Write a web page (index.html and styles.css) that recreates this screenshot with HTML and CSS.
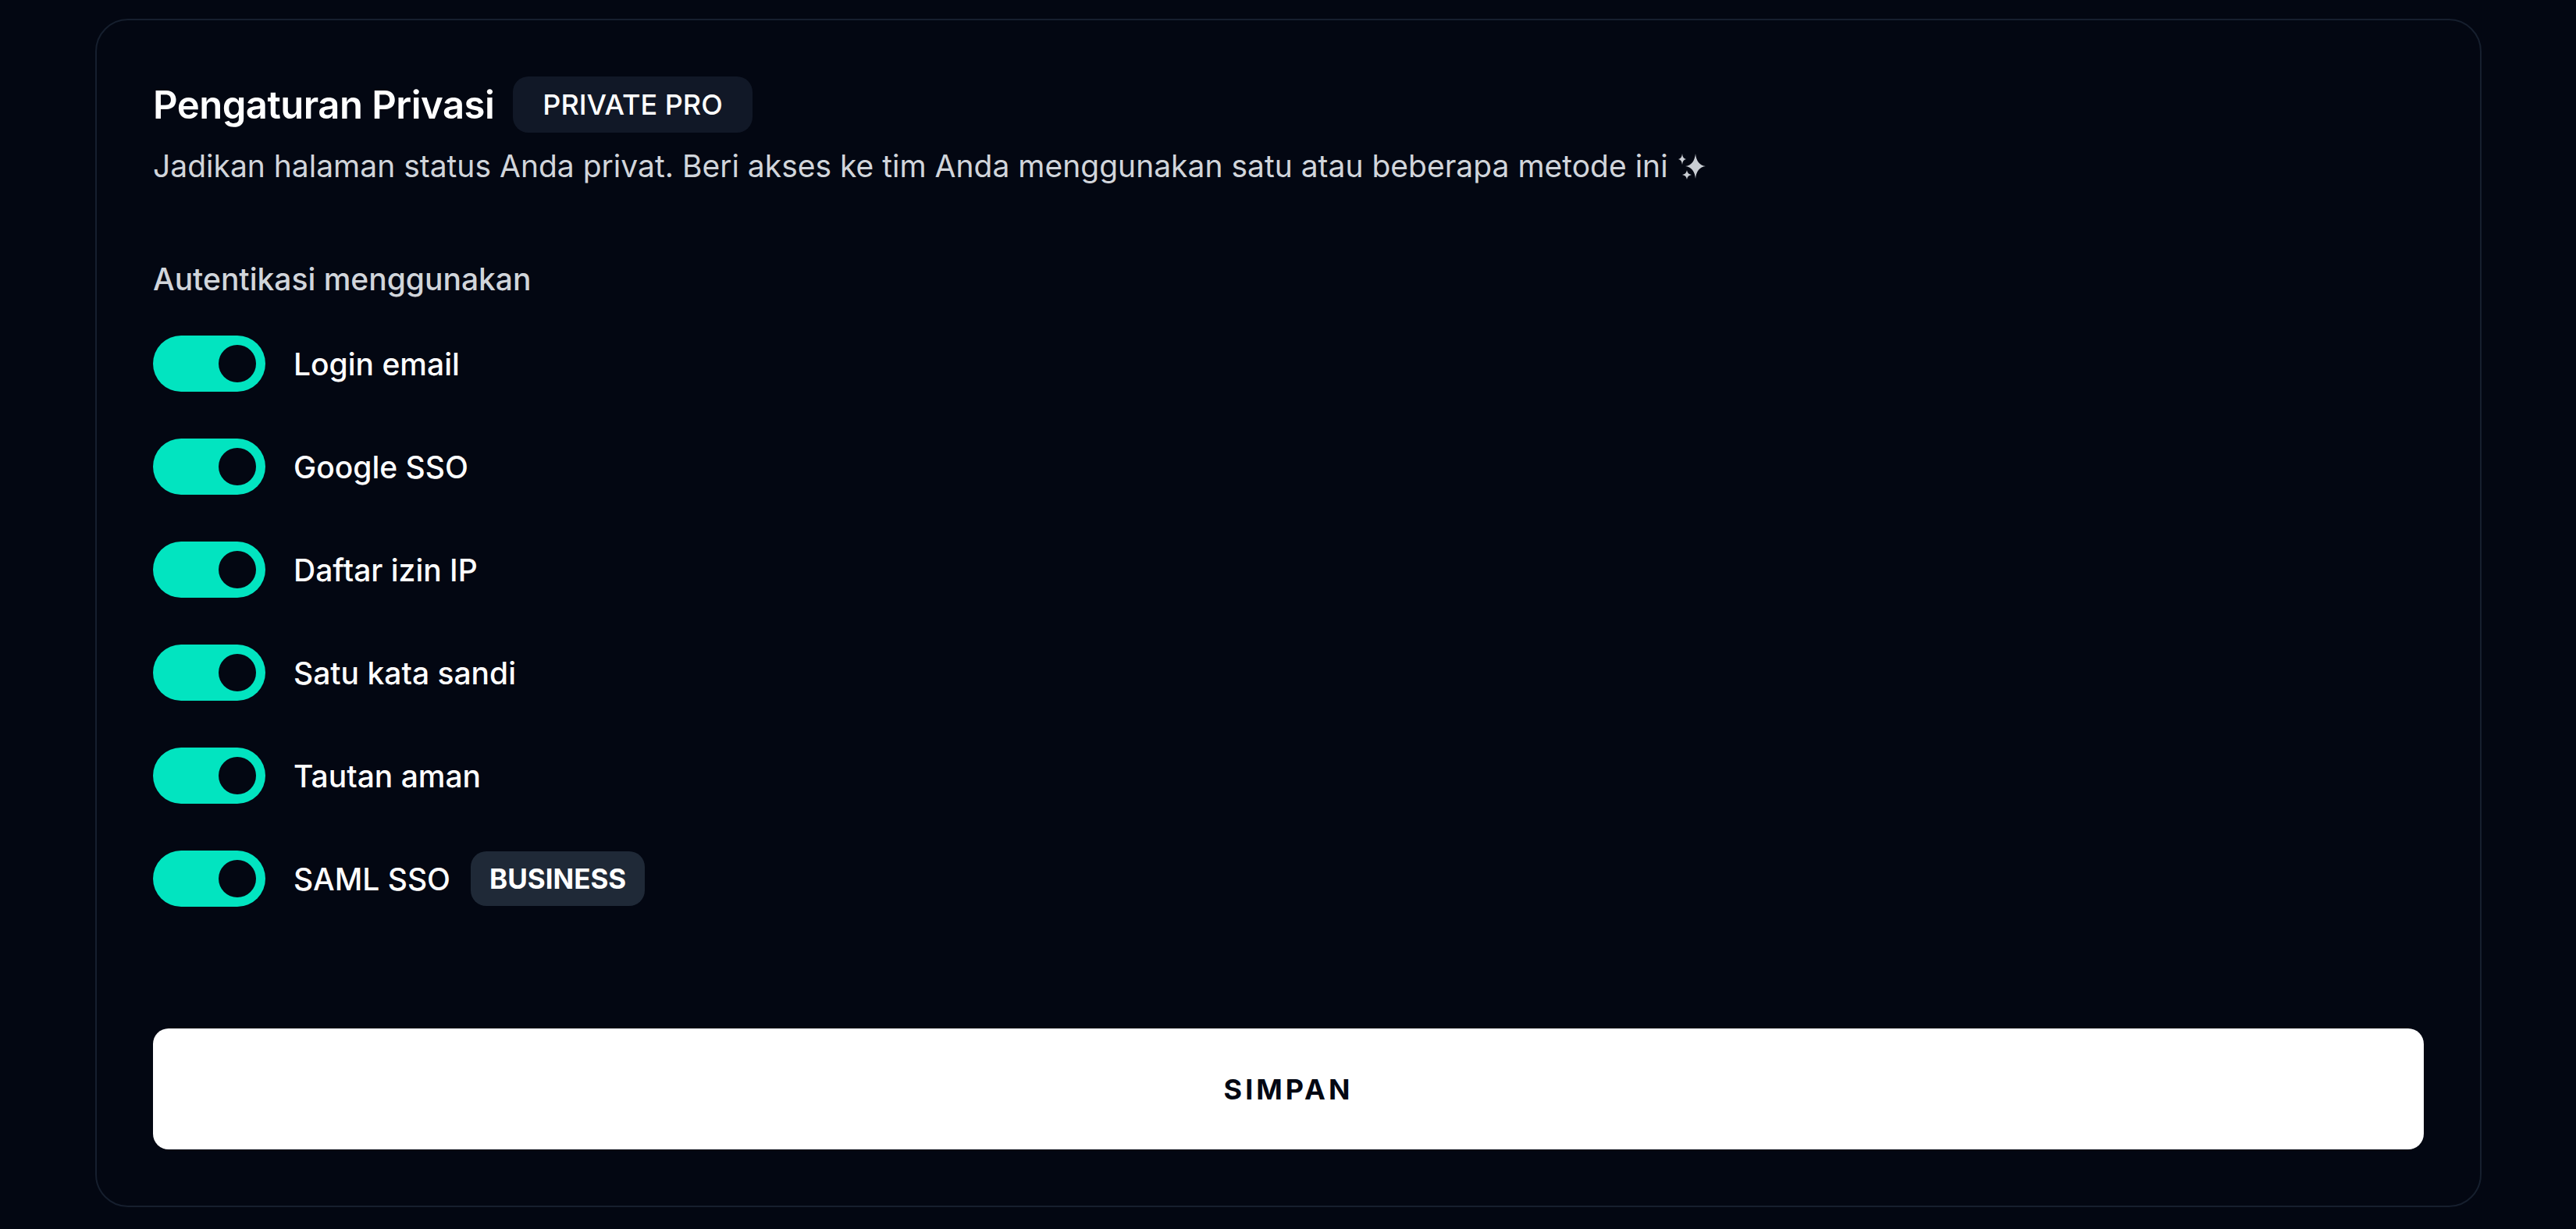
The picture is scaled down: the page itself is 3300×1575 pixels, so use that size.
FILE: index.html
```html
<!DOCTYPE html>
<html lang="id">
<head>
    <meta charset="UTF-8">
    <meta name="viewport" content="width=device-width, initial-scale=1.0">
    <title>Pengaturan Privasi</title>
    <link rel="stylesheet" href="styles.css">
</head>
<body>
    <div class="privacy-card">
        <div class="card-header">
            <h2 class="card-title">Pengaturan Privasi</h2>
            <span class="badge">PRIVATE PRO</span>
        </div>
        <p class="card-desc">
            Jadikan halaman status Anda privat. Beri akses ke tim Anda menggunakan satu atau beberapa metode ini
            <svg class="sparkles" viewBox="0 0 36 36" aria-hidden="true">
                <path d="M22 1 Q23.5 15.5 35 17 Q23.5 18.5 22 33 Q20.5 18.5 9 17 Q20.5 15.5 22 1Z" />
                <path d="M5 1 Q5.6 7.4 10 8 Q5.6 8.6 5 15 Q4.4 8.6 0 8 Q4.4 7.4 5 1Z" />
                <path d="M11 22 Q11.7 27.3 17 28 Q11.7 28.7 11 34 Q10.3 28.7 5 28 Q10.3 27.3 11 22Z" />
            </svg>
        </p>

        <div class="section-label">Autentikasi menggunakan</div>
        <div class="auth-list">
            <div class="auth-row">
                <span class="switch on"><span class="switch-knob"></span></span>
                <span class="auth-name">Login email</span>
            </div>
            <div class="auth-row">
                <span class="switch on"><span class="switch-knob"></span></span>
                <span class="auth-name">Google SSO</span>
            </div>
            <div class="auth-row">
                <span class="switch on"><span class="switch-knob"></span></span>
                <span class="auth-name">Daftar izin IP</span>
            </div>
            <div class="auth-row">
                <span class="switch on"><span class="switch-knob"></span></span>
                <span class="auth-name">Satu kata sandi</span>
            </div>
            <div class="auth-row">
                <span class="switch on"><span class="switch-knob"></span></span>
                <span class="auth-name">Tautan aman</span>
            </div>
            <div class="auth-row">
                <span class="switch on"><span class="switch-knob"></span></span>
                <span class="auth-name">SAML SSO</span>
                <span class="badge badge-plan">BUSINESS</span>
            </div>
        </div>

        <button class="save-btn">SIMPAN</button>
    </div>
</body>
</html>
```

FILE: styles.css
```css
body {
    font-family: Inter, "Noto Sans", sans-serif;
    background-color: #030712;
    color: #ffffff;
    margin: 0;
    padding: 24px 121px 0 122px;
}

.privacy-card {
    border: 2px solid #161f2e;
    border-radius: 42px;
    padding: 72px;
    display: flex;
    flex-direction: column;
}

.card-header {
    display: flex;
    align-items: center;
    gap: 24px;
    height: 72px;
}

.card-title {
    margin: 0;
    font-size: 49px;
    font-weight: 600;
    letter-spacing: -0.5px;
}

.badge {
    display: inline-flex;
    align-items: center;
    height: 72px;
    padding: 0 38px;
    border-radius: 20px;
    background: #111827;
    font-size: 36px;
    font-weight: 500;
    color: #ffffff;
}

.badge-plan {
    height: 70px;
    padding: 0 24px;
    margin-left: 26px;
    background: #1f2937;
    font-size: 35px;
    font-weight: 700;
}

.card-desc {
    margin: 16px 0 0;
    font-size: 39px;
    line-height: 54px;
    color: #d1d5db;
}

.sparkles {
    width: 36px;
    height: 36px;
    margin-left: 2px;
    vertical-align: -5px;
    fill: #c9cdd3;
}

.section-label {
    margin-top: 91px;
    font-size: 39px;
    line-height: 54px;
    font-weight: 500;
    color: #d1d5db;
}

.auth-list {
    margin-top: 45px;
    display: flex;
    flex-direction: column;
    gap: 60px;
}

.auth-row {
    display: flex;
    align-items: center;
    height: 72px;
}

.switch {
    width: 144px;
    height: 72px;
    border-radius: 36px;
    background: #374151;
    display: flex;
    align-items: center;
    padding: 0 12px;
    box-sizing: border-box;
}

.switch.on {
    background: #02e4c0;
    justify-content: flex-end;
}

.switch-knob {
    width: 48px;
    height: 48px;
    border-radius: 50%;
    background: #030712;
}

.auth-name {
    margin-left: 36px;
    font-size: 39px;
    font-weight: 500;
}

.save-btn {
    margin-top: 156px;
    height: 155px;
    border: none;
    border-radius: 20px;
    background: #ffffff;
    color: #030712;
    font-family: inherit;
    font-size: 36px;
    font-weight: 700;
    letter-spacing: 4px;
}
```
